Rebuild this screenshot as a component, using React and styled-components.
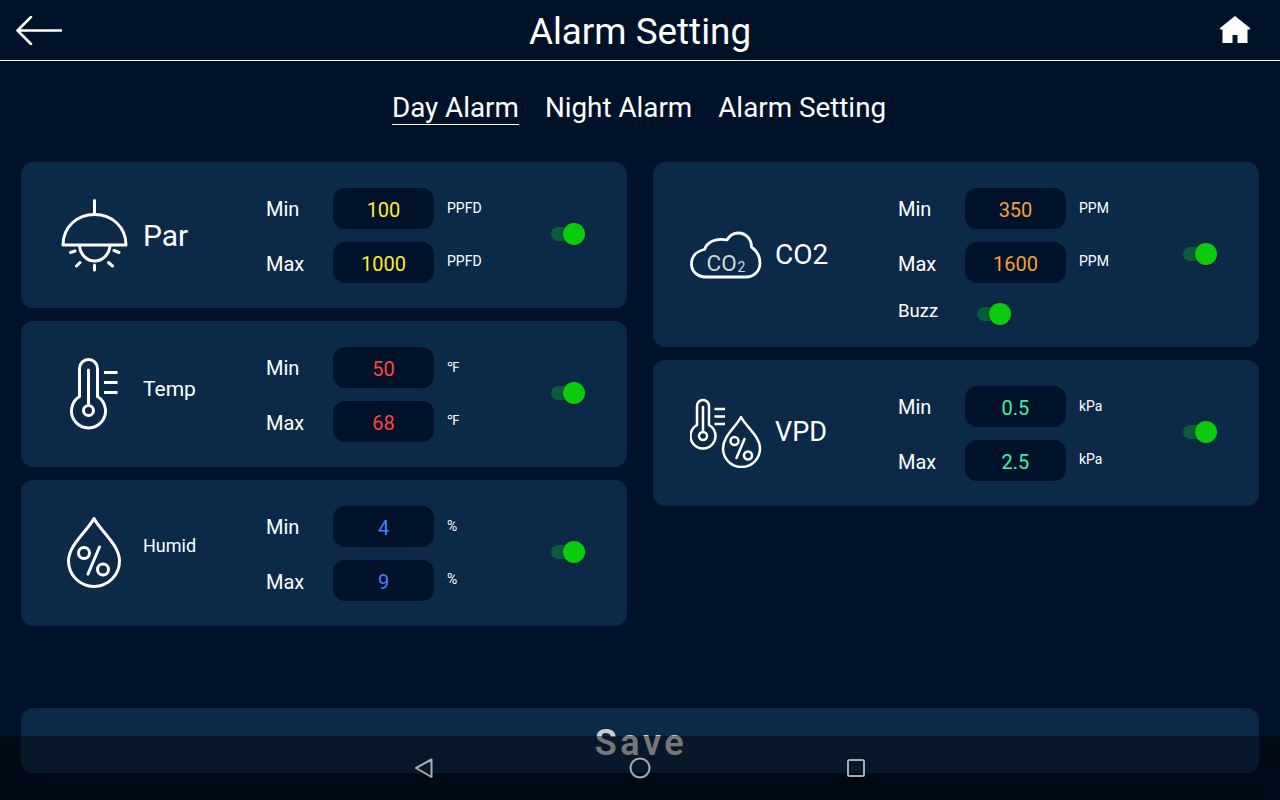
import React from 'react'
import styled, { createGlobalStyle } from 'styled-components'

const GlobalStyle = createGlobalStyle`
  html, body {
    margin: 0;
    padding: 0;
    background: #001229;
  }
  * {
    box-sizing: border-box;
  }
`

const Page = styled.div`
  position: relative;
  width: 1280px;
  height: 800px;
  overflow: hidden;
  background: #001229;
  color: #ffffff;
  font-family: Roboto, "Liberation Sans", sans-serif;
`

const Header = styled.header`
  display: grid;
  grid-template-columns: 1fr auto 1fr;
  align-items: center;
  height: 61px;
  padding: 0 16px;
  border-bottom: 1px solid #ffffff;
`

const Title = styled.h1`
  margin: 3px 0 0;
  font-size: 36.8px;
  font-weight: 400;
  line-height: 42px;
`

const BackIcon = styled.svg`
  display: block;
`

const HomeIcon = styled.svg`
  display: block;
  justify-self: end;
  margin-right: 13px;
`

const Tabs = styled.nav`
  display: flex;
  justify-content: center;
  gap: 26px;
  height: 101px;
  padding: 31px 2px 0 0;
`

const Tab = styled.div`
  height: 33px;
  font-size: 27.8px;
  line-height: 32px;
  border-bottom: 1px solid ${props => props.$active ? '#ffffff' : 'transparent'};
`

const Content = styled.main`
  padding: 0 21px;
`

const Columns = styled.div`
  display: grid;
  grid-template-columns: 606px 606px;
  gap: 26px;
  align-items: start;
  height: 546px;
`

const Column = styled.div`
  display: flex;
  flex-direction: column;
  gap: 13px;
`

const Card = styled.section`
  display: grid;
  grid-template-columns: 86px 129px 285px 34px;
  align-items: center;
  height: ${props => props.$tall ? '185px' : '146px'};
  padding-left: 30px;
  background: #0c2a47;
  border-radius: 12px;
`

const IconBox = styled.div`
  display: flex;
  justify-content: center;
`

const Name = styled.div`
  padding-left: 6px;
  font-size: ${props => props.$size}px;
  line-height: 1.2;
  margin-top: ${props => props.$shift}px;
`

const Fields = styled.div`
  display: flex;
  flex-direction: column;
  gap: 13px;
  align-self: start;
  margin-top: 26px;
`

const Row = styled.div`
  display: grid;
  grid-template-columns: 67px 101px auto;
  align-items: center;
  height: 41px;
`

const FieldLabel = styled.span`
  font-size: 20px;
  line-height: 24px;
  margin-top: ${props => props.$max ? '3px' : '1px'};
`

const ValueBox = styled.div`
  display: flex;
  align-items: center;
  justify-content: center;
  height: 41px;
  padding-top: 2px;
  background: #001229;
  border-radius: 12px;
  font-size: 20px;
  color: ${props => props.$color};
`

const Unit = styled.span`
  padding-left: 13px;
  margin-top: ${props => props.$max ? '-3px' : '-1px'};
  font-size: 14px;
  line-height: 16px;
`

const BuzzRow = styled.div`
  display: grid;
  grid-template-columns: 79px 34px;
  align-items: center;
  height: 38px;
`

const BuzzLabel = styled.span`
  font-size: 18.500px;
  line-height: 22px;
  margin-top: -9px;
`

const SwitchTrack = styled.div`
  position: relative;
  width: 34px;
  height: 14px;
  margin-top: -2px;
  background: #0b5c3c;
  border-radius: 7px;
`

const SwitchKnob = styled.div`
  position: absolute;
  top: -4px;
  right: 0;
  width: 22px;
  height: 22px;
  background: #0ccb0c;
  border-radius: 50%;
  box-shadow: 0 1px 3px rgba(0, 0, 0, 0.35);
`

const SaveBar = styled.div`
  display: flex;
  align-items: center;
  justify-content: center;
  height: 65px;
  padding: 5px 0 0 2px;
  background: #0c2a47;
  border-radius: 12px;
  font-size: 36px;
  font-weight: 600;
  letter-spacing: 3.6px;
  color: #cdcdcd;
`

const NavBar = styled.div`
  position: absolute;
  left: 0;
  right: 0;
  bottom: 0;
  height: 64px;
  background: rgba(0, 0, 0, 0.42);
`

const NavIcons = styled.svg`
  display: block;
`

const LampIcon = () => (
  <svg width="68" height="74" viewBox="60 197 68 74" fill="none" stroke="#fff" strokeWidth="3" strokeLinecap="round" strokeLinejoin="round">
    <path d="M94.500 199.500V213" />
    <path d="M63 244C63 226 77 213.500 94.500 213.500C112 213.500 126 226 126 244Z" />
    <path d="M79.500 245C80.500 254 87 260 94.500 260C102 260 109 254 110 245" />
    <path d="M70.500 251.500L75 250M76.500 265L80 261.500M94.500 264V269M108.500 261.500L112.500 265M114 249.500L119 251.500" />
  </svg>
)

const ThermoIcon = () => (
  <svg width="48" height="72" viewBox="69.500 358 48 72" fill="none" stroke="#fff" strokeWidth="3" strokeLinecap="round">
    <path d="M79 396.500V368.500a9 9 0 0 1 18 0V396.500a17 17 0 1 1 -18 0Z" />
    <path d="M88 370V404" />
    <circle cx="88" cy="410.500" r="5" />
    <path d="M103.500 372.500H117M103.500 382.500H117M103.500 392.500H117" strokeLinecap="butt" />
  </svg>
)

const DropIcon = () => (
  <svg width="56" height="72" viewBox="66.500 517 56 72" fill="none" stroke="#fff" strokeWidth="3" strokeLinecap="round" strokeLinejoin="round">
    <path d="M94.500 518.500C88 531 69 545 69 561A25.500 25.500 0 0 0 120 561C120 545 101 531 94.500 518.500Z" />
    <circle cx="84.500" cy="553" r="5.500" />
    <circle cx="103.500" cy="569.500" r="5.500" />
    <path d="M100 547L88.500 574" />
  </svg>
)

const CloudIcon = () => (
  <svg width="72" height="48" viewBox="691 230 72 48" fill="none" stroke="#fff" strokeWidth="2.800" strokeLinecap="round" strokeLinejoin="round">
    <path d="M707 276C698 276 692.500 270 692.500 263C692.500 255 698 250 705.500 248.500C708 241 717 236.500 728 239C731 234 735 232 739 232C747 232 752.500 238 752.500 246C758 250 761 256 761 262C761 270 755 276 747 276Z" />
    <text x="707.500" y="270" fill="#cfd5db" stroke="none" fontFamily="Roboto, sans-serif" fontSize="22.500" fontWeight="400">CO</text>
    <text x="738.500" y="270.500" fill="#cfd5db" stroke="none" fontFamily="Roboto, sans-serif" fontSize="14" fontWeight="400">2</text>
  </svg>
)

const VpdIcon = () => (
  <svg width="72" height="70" viewBox="691 397 72 70" fill="none" stroke="#fff" strokeWidth="2.500" strokeLinecap="round" strokeLinejoin="round">
    <path d="M698 424V405a6 6 0 0 1 12 0V424a12.500 12.500 0 1 1 -12 0Z" />
    <path d="M704 406V431" />
    <circle cx="704" cy="435" r="4" />
    <path d="M715.500 408H726M715.500 415.500H726M715.500 423H726" strokeLinecap="butt" />
    <path d="M742 416C737 426 724 435 724 447.500A18.500 18.500 0 0 0 761 447.500C761 435 747 426 742 416Z" />
    <circle cx="735.500" cy="440" r="4" />
    <circle cx="749" cy="454.500" r="4" />
    <path d="M745.500 438L737.500 457" />
  </svg>
)

const Switch = () => (
  <SwitchTrack>
    <SwitchKnob />
  </SwitchTrack>
)

const SensorCard = ({ icon, name, size, shift = 0, min, max, unit, color, tall }) => (
  <Card $tall={tall}>
    <IconBox>{icon}</IconBox>
    <Name $size={size} $shift={shift}>{name}</Name>
    <Fields>
      <Row>
        <FieldLabel>Min</FieldLabel>
        <ValueBox $color={color}>{min}</ValueBox>
        <Unit>{unit}</Unit>
      </Row>
      <Row>
        <FieldLabel $max>Max</FieldLabel>
        <ValueBox $color={color}>{max}</ValueBox>
        <Unit $max>{unit}</Unit>
      </Row>
      {tall && (
        <BuzzRow>
          <BuzzLabel>Buzz</BuzzLabel>
          <Switch />
        </BuzzRow>
      )}
    </Fields>
    <Switch />
  </Card>
)

const App = () => {
  return (
    <Page>
      <GlobalStyle />
      <Header>
        <BackIcon width="48" height="29" viewBox="0 0 48 29" fill="none" stroke="#fff" strokeWidth="2.500" strokeLinecap="round" strokeLinejoin="round">
          <path d="M1.500 14.500H45M15 1L1.500 14.500L15 28" />
        </BackIcon>
        <Title>Alarm Setting</Title>
        <HomeIcon width="32" height="28" viewBox="0 0 32 28" fill="#fff">
          <path fillRule="evenodd" d="M16 0L31 12V13.500H28.500V27H18.500V19H13.500V27H3.500V13.500H1V12Z" />
        </HomeIcon>
      </Header>

      <Tabs>
        <Tab $active>Day Alarm</Tab>
        <Tab>Night Alarm</Tab>
        <Tab>Alarm Setting</Tab>
      </Tabs>

      <Content>
        <Columns>
          <Column>
            <SensorCard icon={<LampIcon />} name="Par" size={30} shift={2} min="100" max="1000" unit="PPFD" color="#ffe92b" />
            <SensorCard icon={<ThermoIcon />} name="Temp" size={21} shift={-8} min="50" max="68" unit="℉" color="#ff4343" />
            <SensorCard icon={<DropIcon />} name="Humid" size={18} shift={-14} min="4" max="9" unit="%" color="#4a80ff" />
          </Column>
          <Column>
            <SensorCard tall icon={<CloudIcon />} name="CO2" size={28} min="350" max="1600" unit="PPM" color="#f79f3c" />
            <SensorCard icon={<VpdIcon />} name="VPD" size={27} shift={-2} min="0.5" max="2.5" unit="kPa" color="#42eea8" />
          </Column>
        </Columns>
        <SaveBar>Save</SaveBar>
      </Content>

      <NavBar>
        <NavIcons width="1280" height="64" viewBox="0 736 1280 64" fill="none" stroke="#a8acb0" strokeWidth="2" strokeLinejoin="round">
          <path d="M431.500 759.500V777L416 768Z" />
          <circle cx="640" cy="768" r="9.500" />
          <rect x="848" y="760" width="16" height="16" rx="1.500" />
        </NavIcons>
      </NavBar>
    </Page>
  )
}

export default App
